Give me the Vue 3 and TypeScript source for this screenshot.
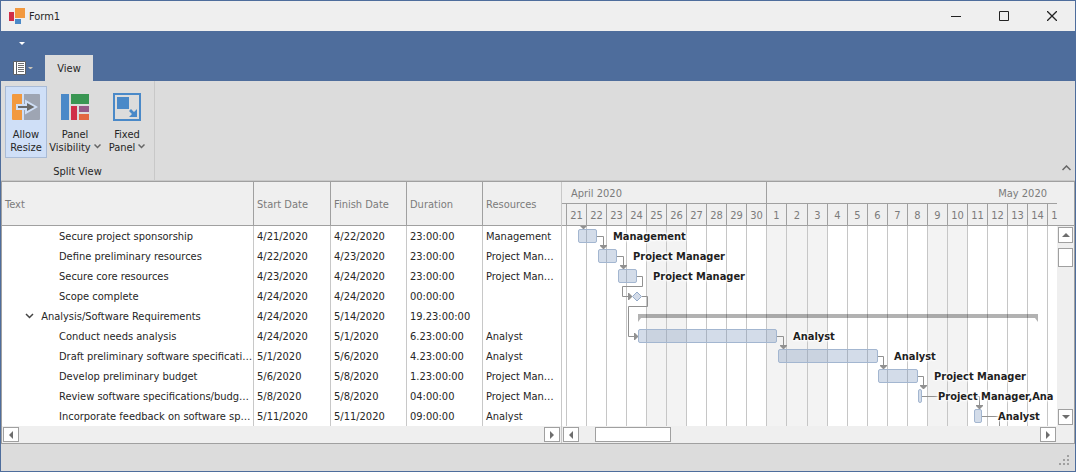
<script setup lang="ts">
interface Task {
  text: string
  start: string
  finish: string
  duration: string
  resources: string
  summary?: boolean
}
interface Day {
  label: string
  wide?: boolean
}
interface Bar {
  x: number
  row: number
  width: number
}
interface Label {
  x: number
  row: number
  text: string
}

const tasks: Task[] = [
  { text: 'Secure project sponsorship', start: '4/21/2020', finish: '4/22/2020', duration: '23:00:00', resources: 'Management' },
  { text: 'Define preliminary resources', start: '4/22/2020', finish: '4/23/2020', duration: '23:00:00', resources: 'Project Man…' },
  { text: 'Secure core resources', start: '4/23/2020', finish: '4/24/2020', duration: '23:00:00', resources: 'Project Man…' },
  { text: 'Scope complete', start: '4/24/2020', finish: '4/24/2020', duration: '00:00:00', resources: '' },
  { text: 'Analysis/Software Requirements', start: '4/24/2020', finish: '5/14/2020', duration: '19.23:00:00', resources: '', summary: true },
  { text: 'Conduct needs analysis', start: '4/24/2020', finish: '5/1/2020', duration: '6.23:00:00', resources: 'Analyst' },
  { text: 'Draft preliminary software specificati…', start: '5/1/2020', finish: '5/6/2020', duration: '4.23:00:00', resources: 'Analyst' },
  { text: 'Develop preliminary budget', start: '5/6/2020', finish: '5/8/2020', duration: '1.23:00:00', resources: 'Project Man…' },
  { text: 'Review software specifications/budg…', start: '5/8/2020', finish: '5/8/2020', duration: '04:00:00', resources: 'Project Man…' },
  { text: 'Incorporate feedback on software sp…', start: '5/11/2020', finish: '5/11/2020', duration: '09:00:00', resources: 'Analyst' },
]

const days: Day[] = [
  ...[21, 22, 23, 24, 25, 26, 27, 28, 29, 30].map((d) => ({ label: String(d) })),
  ...Array.from({ length: 15 }, (_, i) => ({ label: String(i + 1), wide: i === 1 })),
]

const gridLines: number[] = []
let edge = 4
for (const day of days) {
  gridLines.push(edge)
  edge += day.wide ? 21 : 20
}

const weekends = [
  { x: 84, width: 40 },
  { x: 204, width: 61 },
  { x: 365, width: 40 },
]

const bars: Bar[] = [
  { x: 16, row: 0, width: 19 },
  { x: 36, row: 1, width: 19 },
  { x: 56, row: 2, width: 19 },
  { x: 76, row: 5, width: 139 },
  { x: 216, row: 6, width: 100 },
  { x: 316, row: 7, width: 40 },
  { x: 356, row: 8, width: 4 },
  { x: 412, row: 9, width: 8 },
]

const links = [
  'M21.5 0V1',
  'M35 10.5H41.5V20',
  'M55 30.5H61.5V40',
  'M75 50.5H80.5V60.5H60.5V70.5H66',
  'M80 70.5H85.5V80.5H66.5V110.5H72',
  'M215 110.5H221.5V120',
  'M316 130.5H321.5V140',
  'M356 150.5H361.5V160',
  'M360 170.5H417.5V180',
  'M420 190.5H437.5V210',
]
const downArrows = [
  [21.5, 3], [41.5, 23], [61.5, 43], [221.5, 123], [321.5, 143], [361.5, 163], [417.5, 183],
]
const rightArrows = [
  [70, 70.5], [76, 110.5],
]

const labels: Label[] = [
  { x: 51, row: 0, text: 'Management' },
  { x: 71, row: 1, text: 'Project Manager' },
  { x: 91, row: 2, text: 'Project Manager' },
  { x: 231, row: 5, text: 'Analyst' },
  { x: 332, row: 6, text: 'Analyst' },
  { x: 372, row: 7, text: 'Project Manager' },
  { x: 376, row: 8, text: 'Project Manager,Ana' },
  { x: 436, row: 9, text: 'Analyst' },
]
</script>

<template>
  <div class="window">
    <header class="titlebar">
      <svg class="app-icon" width="16" height="16" viewBox="0 0 16 16">
        <path d="M0 4h5v9H0z" fill="#d02e47" />
        <path d="M6 0h10v10H6z" fill="#f2993f" />
        <path d="M6 11h6v5H6z" fill="#4a89c8" />
      </svg>
      <span class="title">Form1</span>
      <button class="sys" type="button" aria-label="Minimize">
        <svg width="10" height="10" viewBox="0 0 10 10"><path d="M0 5.5h10" stroke="#222" /></svg>
      </button>
      <button class="sys" type="button" aria-label="Maximize">
        <svg width="10" height="10" viewBox="0 0 10 10"><path d="M.5.5h9v9h-9z" fill="none" stroke="#222" /></svg>
      </button>
      <button class="sys" type="button" aria-label="Close">
        <svg width="10" height="10" viewBox="0 0 10 10"><path d="M0 0l10 10M10 0L0 10" stroke="#222" stroke-width="1.3" /></svg>
      </button>
    </header>

    <div class="quick">
      <button class="plain" type="button" aria-label="Customize toolbar">
        <svg width="6" height="3" viewBox="0 0 6 3"><path d="M0 0h6L3 3z" fill="#fff" /></svg>
      </button>
    </div>
    <nav class="tabs">
      <button class="file" type="button" aria-label="File">
        <svg width="20" height="14" viewBox="0 0 20 14">
          <path d="M.5.5h12v13H.5z" fill="#fff" stroke="#5d6064" />
          <path d="M3.5 0v14" stroke="#5d6064" />
          <path d="M5 2.5h6M5 4.5h6M5 6.5h6M5 8.5h6M5 10.5h6" stroke="#707070" />
          <path d="M15 6h5l-2 2h-1z" fill="#c9c4b8" />
        </svg>
      </button>
      <button class="tab" type="button">View</button>
    </nav>

    <section class="ribbon">
      <div class="group">
        <div class="commands">
          <button class="command allow checked" type="button">
            <svg width="28" height="26" viewBox="0 0 28 26">
              <path d="M0 1a1 1 0 0 1 1-1h9v26H1a1 1 0 0 1-1-1z" fill="#f2993f" />
              <path d="M12 0h15a1 1 0 0 1 1 1v24a1 1 0 0 1-1 1H12z" fill="#9ea5b3" />
              <path d="M4 10h9V5.500L26 13l-13 7.500V16H4z" fill="#cfdff7" />
              <path d="M6 12h9V9l7.500 4-7.500 4v-3H6z" fill="#6b6b6b" />
            </svg>
            <span>Allow<br />Resize</span>
          </button>
          <button class="command visibility" type="button">
            <svg width="28" height="26" viewBox="0 0 28 26">
              <path d="M0 0h8v26H0z" fill="#4a89c8" />
              <path d="M10 0h18v10H10z" fill="#3a9653" />
              <path d="M10 12h6v14h-6z" fill="#d02e47" />
              <path d="M18 12h10v6H18z" fill="#955a88" />
              <path d="M18 20h10v6H18z" fill="#e36740" />
            </svg>
            <span>Panel<br />Visibility<svg class="drop" width="7" height="5" viewBox="0 0 7 5"><path d="M.5.500l3 3 3-3" fill="none" stroke="#666" stroke-width="1.500" /></svg></span>
          </button>
          <button class="command fixed" type="button">
            <svg width="28" height="28" viewBox="0 0 28 28">
              <rect x="1" y="1" width="26" height="26" fill="none" stroke="#4a89c8" stroke-width="2" />
              <path d="M4 4h12v12H4z" fill="#4a89c8" />
              <path d="M24 16v8h-8l3-3-3-3 2-2 3 3z" fill="#4a89c8" />
            </svg>
            <span>Fixed<br />Panel<svg class="drop" width="7" height="5" viewBox="0 0 7 5"><path d="M.5.500l3 3 3-3" fill="none" stroke="#666" stroke-width="1.500" /></svg></span>
          </button>
        </div>
        <div class="caption">Split View</div>
      </div>
      <button class="collapse" type="button" aria-label="Collapse ribbon">
        <svg width="9" height="6" viewBox="0 0 9 6"><path d="M.5 5l4-4 4 4" fill="none" stroke="#666" stroke-width="1.500" /></svg>
      </button>
    </section>

    <main class="split">
      <section class="tree">
        <table>
          <colgroup>
            <col class="c-text" /><col class="c-start" /><col class="c-date" /><col class="c-date" /><col />
          </colgroup>
          <thead>
            <tr><th>Text</th><th>Start Date</th><th>Finish Date</th><th>Duration</th><th>Resources</th></tr>
          </thead>
          <tbody>
            <tr v-for="task in tasks" :key="task.text">
              <td :class="task.summary ? 'parent' : 'child'">
                <svg v-if="task.summary" width="9" height="6" viewBox="0 0 9 6"><path d="M1 1l3.500 3.500L8 1" fill="none" stroke="#444" stroke-width="1.500" /></svg>
                {{ task.text }}
              </td>
              <td>{{ task.start }}</td>
              <td>{{ task.finish }}</td>
              <td>{{ task.duration }}</td>
              <td>{{ task.resources }}</td>
            </tr>
          </tbody>
        </table>
        <div class="hscroll">
          <button class="step" type="button" aria-label="Scroll left"><svg width="4" height="8" viewBox="0 0 4 8"><path d="M4 0v8L0 4z" /></svg></button>
          <button class="step end" type="button" aria-label="Scroll right"><svg width="4" height="8" viewBox="0 0 4 8"><path d="M0 0v8l4-4z" /></svg></button>
        </div>
      </section>

      <section class="gantt">
        <div class="view">
          <div class="months">
            <div class="april">April 2020</div>
            <div class="may">May 2020</div>
          </div>
          <div class="days">
            <div v-for="day in days" :key="day.label" class="day" :class="{ wide: day.wide }">{{ day.label }}</div>
          </div>
          <div class="chart">
            <svg class="drawing" width="100%" height="100%">
              <rect v-for="w in weekends" :key="w.x" :x="w.x" y="0" :width="w.width" height="100%" fill="#f3f3f3" />
              <rect v-for="x in gridLines" :key="x" :x="x" y="0" width="1" height="100%" fill="#c6c6c6" />
              <g v-for="b in bars" :key="b.row">
                <rect :x="b.x + 0.5" :y="b.row * 20 + 3.5" :width="b.width - 1" height="13" rx="1.5" fill="#6d8bb5" fill-opacity="0.3" stroke="#a3b6d0" />
              </g>
              <path d="M75 66l4.500 4.500-4.500 4.500-4.500-4.500z" fill="#d3dbe8" stroke="#94abca" />
              <path d="M76 88h400v8l-3-4H79l-3 4z" fill="#000" fill-opacity="0.3" />
              <path v-for="d in links" :key="d" :d="d" fill="none" stroke="#919191" />
              <path v-for="a in downArrows" :key="a[0]" :d="`M${a[0] - 3.5} ${a[1] - 4}h7v1l-3 3h-1l-3-3z`" fill="#919191" />
              <path v-for="a in rightArrows" :key="a[0]" :d="`M${a[0] - 4} ${a[1] - 3.5}v7h1l3-3v-1l-3-3z`" fill="#919191" />
            </svg>
            <span v-for="l in labels" :key="l.row" class="label" :style="{ left: l.x + 'px', top: l.row * 20 + 'px' }">{{ l.text }}</span>
          </div>
          <div class="hscroll">
            <button class="step" type="button" aria-label="Scroll left"><svg width="4" height="8" viewBox="0 0 4 8"><path d="M4 0v8L0 4z" /></svg></button>
            <div class="thumb"></div>
            <button class="step end" type="button" aria-label="Scroll right"><svg width="4" height="8" viewBox="0 0 4 8"><path d="M0 0v8l4-4z" /></svg></button>
          </div>
        </div>
        <div class="vscroll">
          <div class="corner"></div>
          <button class="step" type="button" aria-label="Scroll up"><svg width="8" height="4" viewBox="0 0 8 4"><path d="M0 4h8L4 0z" /></svg></button>
          <div class="thumb"></div>
          <button class="step end" type="button" aria-label="Scroll down"><svg width="8" height="4" viewBox="0 0 8 4"><path d="M0 0h8L4 4z" /></svg></button>
        </div>
      </section>
    </main>

    <footer class="status">
      <svg width="10" height="10" viewBox="0 0 10 10" fill="#a0a0a0">
        <path d="M8 0h2v2H8zM4 4h2v2H4zM8 4h2v2H8zM0 8h2v2H0zM4 8h2v2H4zM8 8h2v2H8z" />
      </svg>
    </footer>
  </div>
</template>

<style>
body {
  margin: 0;
}
</style>

<style scoped>
.window {
  box-sizing: border-box;
  display: flex;
  flex-direction: column;
  min-height: 100vh;
  border: 1px solid #4e6d9c;
  background: #dcdcdc;
  color: #262626;
  font: 11px/14px "DejaVu Sans Condensed", "DejaVu Sans", sans-serif;
}
.window * {
  box-sizing: border-box;
}
button {
  margin: 0;
  padding: 0;
  border: 0;
  background: none;
  color: inherit;
  font: inherit;
}
svg {
  display: block;
}
.titlebar {
  display: flex;
  align-items: center;
  height: 30px;
  padding-left: 8px;
  background: #efefef;
}
.title {
  flex: 1;
  margin-left: 4px;
  padding-top: 1px;
}
.sys {
  display: grid;
  place-items: center;
  width: 48px;
  height: 30px;
  padding-left: 2px;
}
.quick {
  display: flex;
  height: 24px;
  padding-left: 18px;
  background: #4e6d9c;
}
.tabs {
  display: flex;
  height: 26px;
  padding-left: 12px;
  background: #4e6d9c;
}
.file {
  width: 32px;
}
.tab {
  width: 48px;
  padding-top: 1px;
  background: #dcdcdc;
}
.ribbon {
  display: flex;
  justify-content: space-between;
  height: 100px;
  border-bottom: 1px solid #c8c8c8;
}
.group {
  width: 154px;
  border-right: 1px solid #c8c8c8;
}
.commands {
  display: flex;
  padding: 5px 0 0 4px;
}
.command {
  display: flex;
  flex-direction: column;
  align-items: center;
  height: 72px;
  padding-top: 6px;
  border: 1px solid transparent;
  line-height: 13px;
  white-space: nowrap;
}
.command > svg {
  flex: 0 0 28px;
}
.command > span {
  margin-top: 7px;
}
.allow {
  width: 42px;
}
.visibility {
  width: 56px;
}
.fixed {
  width: 48px;
}
.checked {
  border-color: #a9bbd6;
  background: #cfdff7;
}
.drop {
  display: inline-block;
  margin-left: 3px;
  vertical-align: 2px;
}
.caption {
  padding-top: 7px;
  text-align: center;
}
.collapse {
  align-self: flex-end;
  padding: 0 4px 9px 0;
}
.split {
  display: flex;
  flex: 1;
  border: 1px solid #a0a0a0;
  background: #fff;
}
.tree {
  display: flex;
  flex: 0 0 560px;
  flex-direction: column;
  justify-content: space-between;
  border-right: 1px solid #c8c8c8;
}
table {
  width: 100%;
  border-spacing: 0;
  table-layout: fixed;
}
.c-text {
  width: 252px;
}
.c-start {
  width: 77px;
}
.c-date {
  width: 76px;
}
th,
td {
  overflow: hidden;
  padding: 2px 0 0 3px;
  text-align: left;
  white-space: nowrap;
}
th {
  height: 44px;
  border-right: 1px solid #a0a0a0;
  border-bottom: 1px solid #a0a0a0;
  background: #efefef;
  color: #7b7b7b;
  font-weight: normal;
}
td {
  height: 20px;
  border-right: 1px solid #c8c8c8;
}
th:last-child,
td:last-child {
  border-right: 0;
}
.child {
  padding-left: 57px;
}
.parent {
  padding-left: 23px;
}
.parent svg {
  display: inline-block;
  margin-right: 4px;
  vertical-align: 1px;
}
.hscroll {
  display: flex;
  align-items: center;
  height: 17px;
  padding: 0 1px;
  background: #efefef;
}
.step {
  display: grid;
  flex: none;
  place-items: center;
  width: 16px;
  height: 15px;
  border: 1px solid #a0a0a0;
  background: #fff;
  fill: #6e6e6e;
}
.thumb {
  border: 1px solid #a0a0a0;
  background: #fff;
}
.hscroll .thumb {
  width: 76px;
  height: 15px;
  margin-left: 16px;
}
.hscroll .end {
  margin-left: auto;
}
.gantt {
  display: flex;
  flex: 1;
  min-width: 0;
}
.view {
  display: flex;
  flex: 1;
  flex-direction: column;
  min-width: 0;
}
.months {
  display: flex;
  height: 22px;
  border-bottom: 1px solid #a0a0a0;
  background: #efefef;
  color: #7b7b7b;
  line-height: 23px;
}
.april {
  flex: 0 0 205px;
  padding-left: 9px;
  border-right: 1px solid #a0a0a0;
}
.may {
  flex: 1;
  padding-right: 10px;
  text-align: right;
}
.days {
  display: flex;
  overflow: hidden;
  height: 22px;
  padding-left: 4px;
  border-bottom: 1px solid #a0a0a0;
  background: #efefef;
  color: #7b7b7b;
  line-height: 23px;
}
.day {
  flex: 0 0 20px;
  border-left: 1px solid #a0a0a0;
  text-align: center;
}
.wide {
  flex-basis: 21px;
}
.chart {
  position: relative;
  flex: 1;
  overflow: hidden;
  min-height: 200px;
}
.drawing {
  position: absolute;
  inset: 0;
}
.label {
  position: absolute;
  color: #1f1f1f;
  font-weight: bold;
  line-height: 21px;
  white-space: nowrap;
  text-shadow: 0 0 2px #fff, 0 0 2px #fff, 0 0 3px #fff, 0 0 3px #fff, 0 0 4px #fff, 0 0 4px #fff;
}
.vscroll {
  display: flex;
  flex-direction: column;
  align-items: center;
  width: 17px;
  padding-bottom: 18px;
  background: #efefef;
}
.corner {
  align-self: stretch;
  height: 44px;
  margin-bottom: 1px;
  border-bottom: 1px solid #a0a0a0;
}
.vscroll .step {
  width: 15px;
  height: 16px;
}
.vscroll .thumb {
  width: 15px;
  height: 19px;
  margin-top: 5px;
}
.vscroll .end {
  margin-top: auto;
}
.status {
  display: flex;
  align-items: flex-end;
  justify-content: flex-end;
  height: 27px;
  padding: 0 6px 6px;
}
</style>
